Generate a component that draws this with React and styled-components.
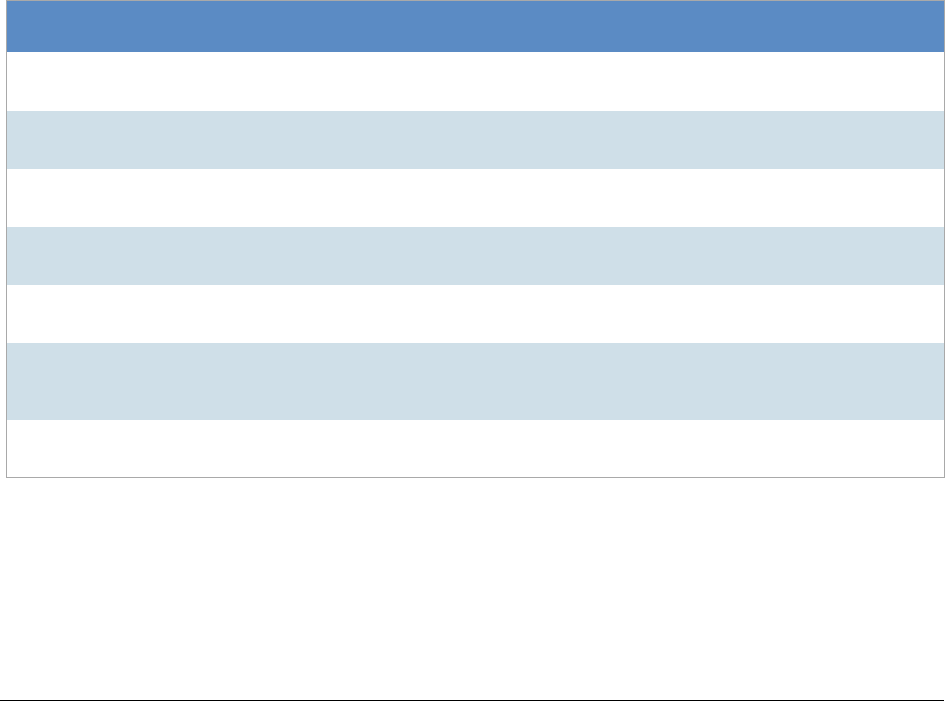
import styled, { createGlobalStyle } from "styled-components";

const GlobalStyle = createGlobalStyle`
    *, *::before, *::after {
        box-sizing: border-box;
    }

    body {
        margin: 0;
        background: #ffffff;
        font-family: "Liberation Sans", Arial, sans-serif;
    }
`

const rows = [
    { height: 59, shaded: false },
    { height: 58, shaded: true },
    { height: 58, shaded: false },
    { height: 58, shaded: true },
    { height: 58, shaded: false },
    { height: 77, shaded: true },
    { height: 57, shaded: false },
]

export default function App() {
    return (
        <>
            <GlobalStyle />
            <Page>
                <Table>
                    <HeaderRow />
                    {rows.map((row, i) => (
                        <Row key={i} $height={row.height} $shaded={row.shaded} />
                    ))}
                </Table>
                <Rule />
            </Page>
        </>
    )
}

const Page = styled.div`
    width: 945px;
    height: 701px;

    display: flex;
    flex-direction: column;
    justify-content: space-between;
`

const Table = styled.div`
    width: 939px;
    margin-left: 6px;

    display: flex;
    flex-direction: column;

    border: 1px solid #a9a9a9;
`

const HeaderRow = styled.div`
    height: 51px;
    background: #5b8bc4;
`

const Row = styled.div`
    height: ${(p) => p.$height}px;
    background: ${(p) => (p.$shaded ? "#cfdfe8" : "#ffffff")};
`

const Rule = styled.div`
    width: 944px;
    height: 1px;
    background: #000000;
`
